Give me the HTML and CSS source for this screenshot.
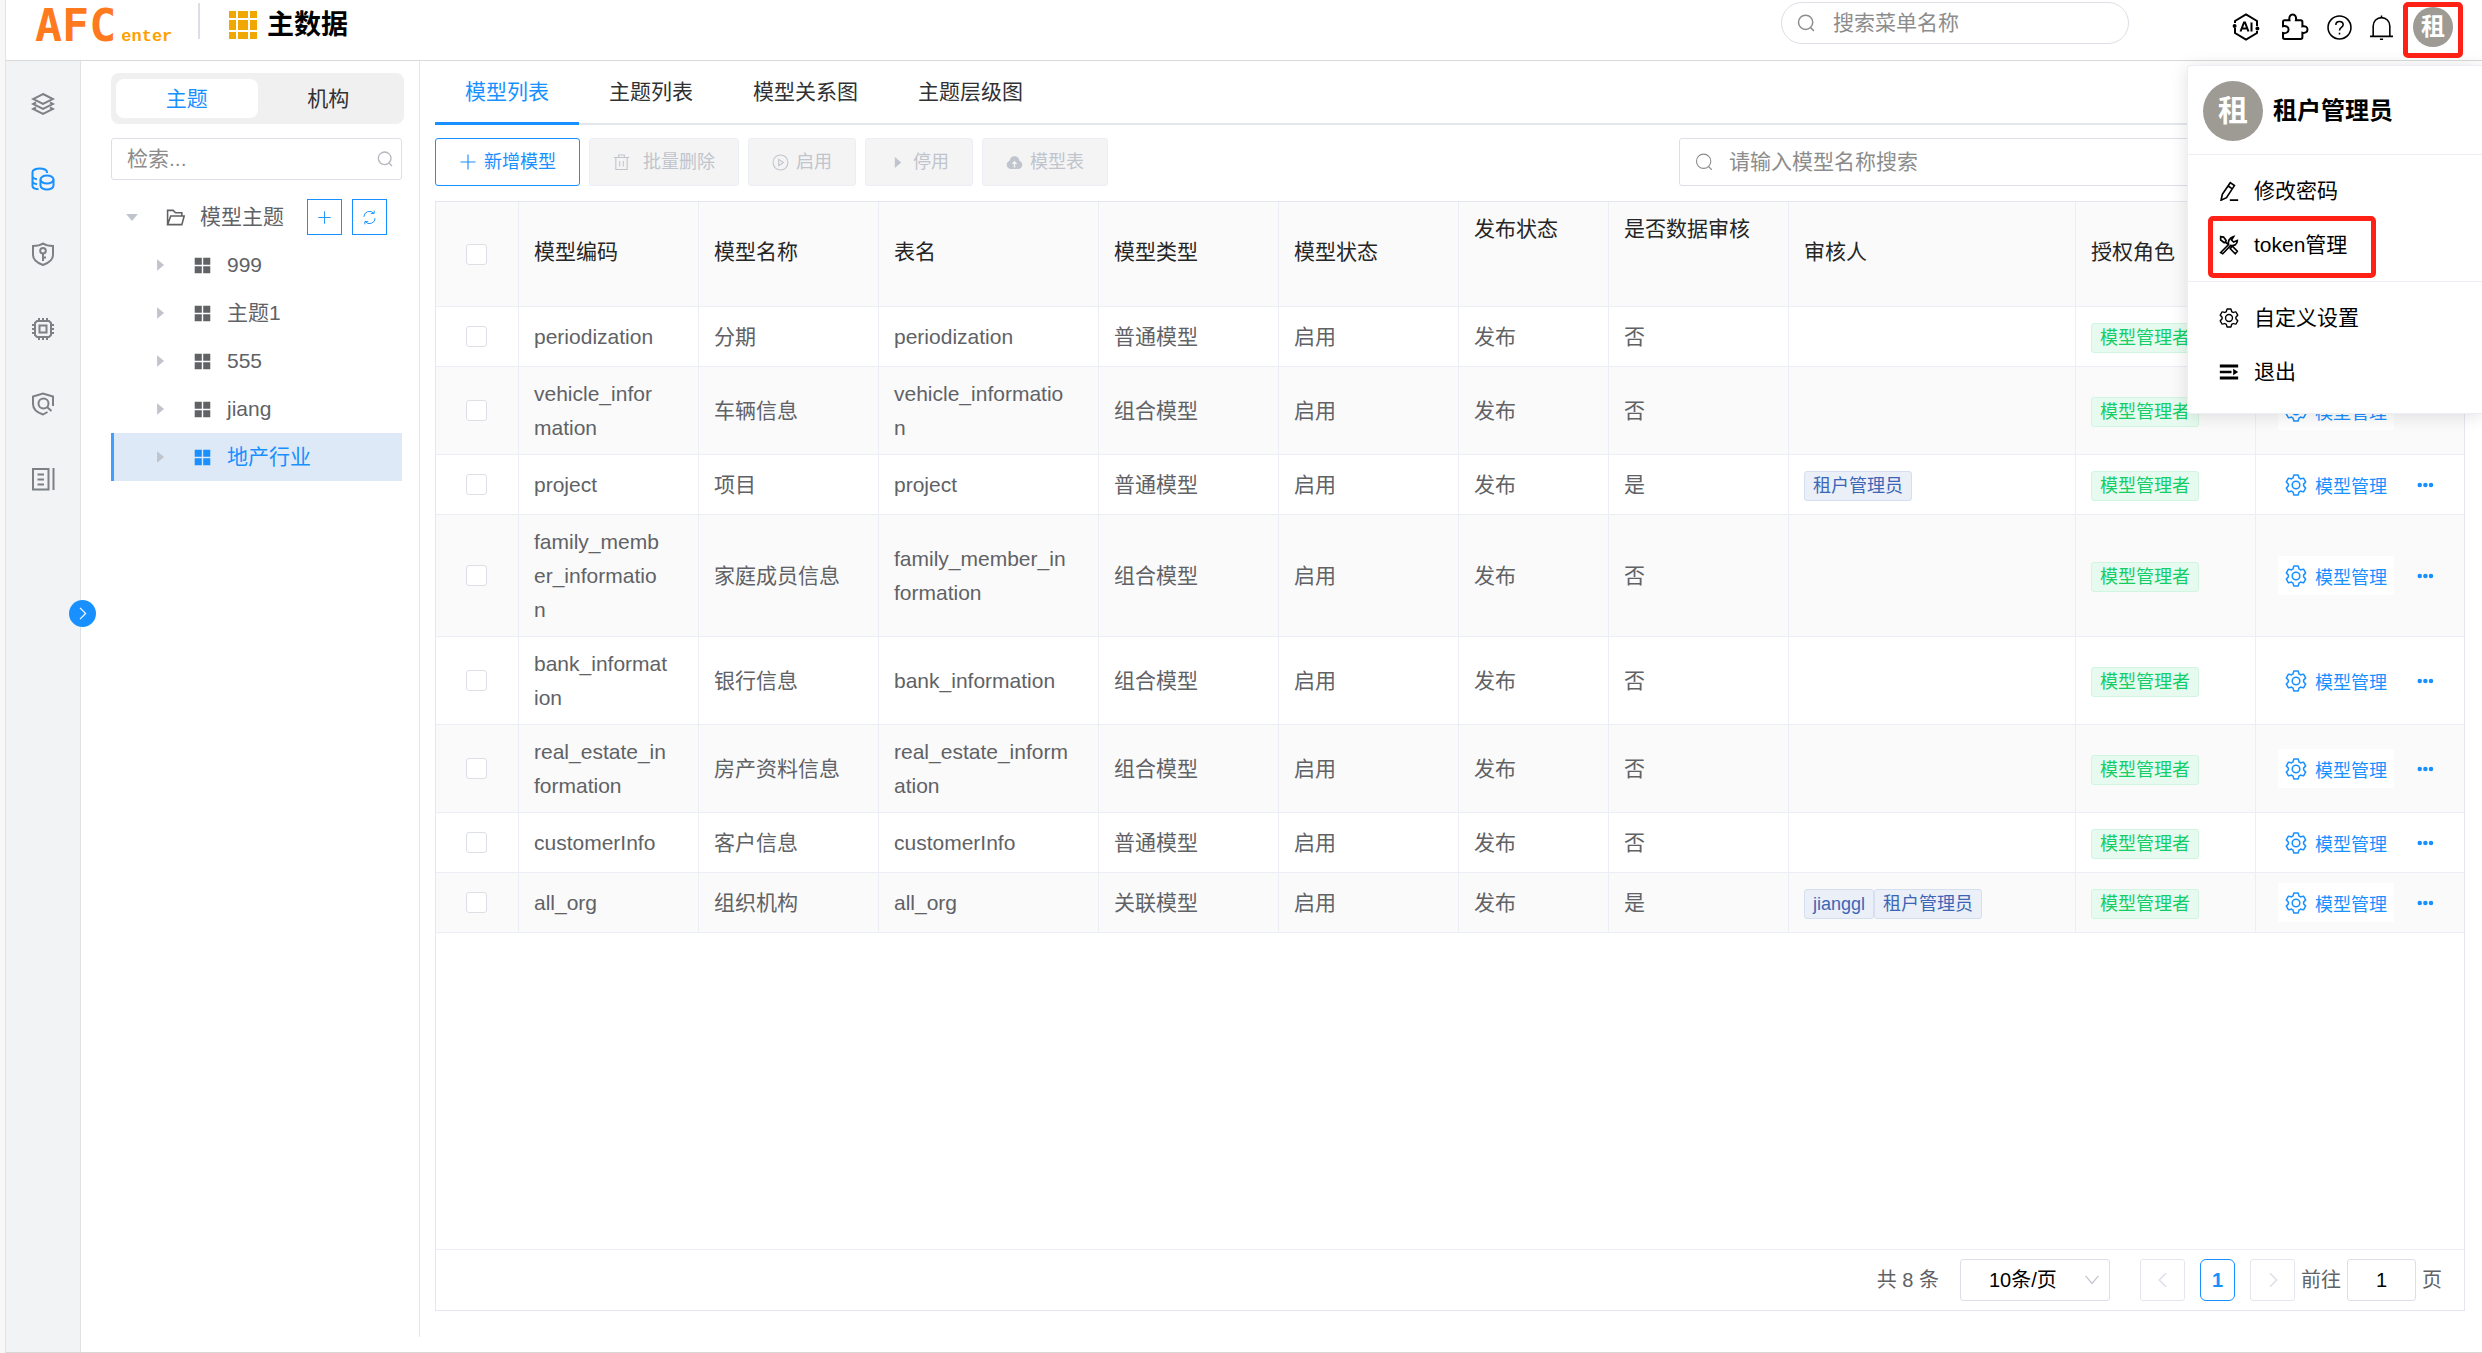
FILE: index.html
```html
<!DOCTYPE html>
<html lang="zh-CN">
  <head>
    <meta charset="UTF-8" />
    <meta name="viewport" content="width=device-width, initial-scale=1.0" />
    <title>主数据</title>
    <link rel="stylesheet" href="styles.css">
  </head>
  <body>
    <!-- icons -->
    <svg class="sprite" aria-hidden="true">
      <symbol id="i-search" viewBox="0 0 24 24"><circle cx="11.5" cy="11" r="9.5" /><path d="M18 18l4.5 4.5" /></symbol>
      <symbol id="i-plus" viewBox="0 0 24 24"><path d="M12 2v20M2 12h20" /></symbol>
      <symbol id="i-refresh" viewBox="0 0 24 24"><path d="M21 13a9 9 0 0 1-16 5.500M3 11a9 9 0 0 1 16-5.500M14 5.500h5.500V1M10 18.500H4.500V23" /></symbol>
      <symbol id="i-right" viewBox="0 0 24 24"><path d="M8 3l9 9-9 9" /></symbol>
      <symbol id="i-left" viewBox="0 0 24 24"><path d="M16 3l-9 9 9 9" /></symbol>
      <symbol id="i-caret" viewBox="0 0 24 24"><path d="M7 2l12 10L7 22z" /></symbol>
      <symbol id="i-folder" viewBox="0 0 24 24"><path d="M2 21V3h7l3 3h8v4M2 21L6 10h17l-3 11z" /></symbol>
      <symbol id="i-grid" viewBox="0 0 24 24"><path d="M1 1h10v10H1zM13 1h10v10H13zM1 13h10v10H1zM13 13h10v10H13z" /></symbol>
      <symbol id="i-layers" viewBox="0 0 24 24"><path d="M12 2l10 5-10 5L2 7zM5 10.500L2 12l10 5 10-5-3-1.500M5 15.500L2 17l10 5 10-5-3-1.500" /></symbol>
      <symbol id="i-data" viewBox="0 0 24 24"><ellipse cx="16" cy="12.500" rx="6.500" ry="4" /><path d="M9.500 12.500v6c0 2.200 3 4 6.500 4s6.500-1.800 6.500-4v-6M16 6V5c0-2-3.200-3.500-7.200-3.500S1.500 3 1.500 5v14c0 1.800 2.500 3 6 3.300M1.500 10c1 1.300 2.500 2 4.500 2.300M1.500 15c1 1.300 2.500 2 4.500 2.300" /></symbol>
      <symbol id="i-shield-key" viewBox="0 0 24 24"><path d="M12 1.500c3 2 6 2.500 10 2.500v9c0 5-4.500 8-10 10-5.500-2-10-5-10-10V4c4 0 7-.5 10-2.500z" /><circle cx="12" cy="8.800" r="2.800" /><path d="M12 11.600V19M12 15.500h3" /></symbol>
      <symbol id="i-chip" viewBox="0 0 24 24"><path d="M6 4h12l2 2v12l-2 2H6l-2-2V6zM8.500 8.500h7v7h-7zM8 4V1M12 4V1M16 4V1M8 23v-3M12 23v-3M16 23v-3M4 8H1M4 12H1M4 16H1M23 8h-3M23 12h-3M23 16h-3" /></symbol>
      <symbol id="i-shield-find" viewBox="0 0 24 24"><path d="M22 14V4.500L12 1.500 2 4.500V12c0 5 4 8.500 10 10.500l4.500-2.500" /><circle cx="12.500" cy="11.500" r="5" /><path d="M16 15l4.500 4" /></symbol>
      <symbol id="i-doc" viewBox="0 0 24 24"><path d="M2 2h15.500v20.500H2zM22.500 1v22M6.500 7.500h6.500M6.500 12.500h6.500M6.500 17.500h6.500" /></symbol>
      <symbol id="i-trash" viewBox="0 0 24 24"><path d="M1 5h22M8 5V1.500h8V5M4 5v17h16V5M9.500 10v7.500M14.500 10v7.500" /></symbol>
      <symbol id="i-play" viewBox="0 0 24 24"><circle cx="12" cy="12" r="10.500" /><path d="M9.500 7.500l6.500 4.500-6.500 4.500z" /></symbol>
      <symbol id="i-cloud" viewBox="0 0 24 24"><path fill-rule="evenodd" d="M12 3c-4 0-6.500 3-7 6.500C2.500 10.500 1 12.600 1 15c0 3.400 2.600 6 6 6h10c3.400 0 6-2.600 6-6 0-2.400-1.500-4.500-4-5.500C18.500 6 16 3 12 3zM12 9.500l4 4.500h-3v5h-2v-5H8z" /></symbol>
      <symbol id="i-ai" viewBox="0 0 28 28"><path d="M3 10V8L14 1.500 25 8v5M25 18v2L14 26.500 3 20v-5" /><path d="M8.500 18.500l3.500-9h1l3.500 9M9.800 15.500h5.400M19.500 9.500v9" /><circle cx="2.600" cy="13" r="1" /><circle cx="25.400" cy="15.500" r="1" /></symbol>
      <symbol id="i-puzzle" viewBox="0 0 28 28"><path d="M2 9.500V9c0-1 .8-1.700 1.700-1.700H8.500c-.8-3.500 1-5.800 3.200-5.800s4 2.300 3.200 5.800h4.800c1 0 1.700.8 1.700 1.700v4.400c3-.8 5.100.8 5.100 3.100s-2.100 4-5.100 3.200v4.600c0 1-.8 1.700-1.700 1.700h-16c-1 0-1.700-.8-1.700-1.700V20c3 .6 5.600-.8 5.600-3.500S5 12.600 2 13.200z" /></symbol>
      <symbol id="i-help" viewBox="0 0 24 24"><circle cx="12" cy="12" r="11" /><path d="M8.500 9.500c0-2 1.500-3.300 3.500-3.300s3.500 1.300 3.500 3.200c0 2.600-3.500 2.600-3.500 5.400M12 17v1.800" /></symbol>
      <symbol id="i-bell" viewBox="0 0 24 24"><path d="M1 20.500h22M4 20.500V10.500a8 8 0 0 1 16 0v10M12 2.500V.5M10.500 23.300h3" /></symbol>
      <symbol id="i-pen" viewBox="0 0 24 24"><path d="M13.500 2l5 3.500L9 20l-6.500 3L4 16zM11 6l5 3.500M13 23h10" /></symbol>
      <symbol id="i-tools" viewBox="0 0 24 24"><path d="M2 2l3.500.5 3 4-.5 2-2 .5-4-3zM8 8.500l3.500 3.500M14.500 15l1.500-1.500 6 6-2.500 3-6-6zM2 21l9.500-9.500c-1-3.500.5-8 6-9.500l-2.500 4 2.500 2.500 4.500-2c0 5-4 7-8 6L4.500 22.500z" /></symbol>
      <symbol id="i-exit" viewBox="0 0 24 24"><path d="M1 3h22v3.500H1zM1 17.500h22V21H1zM1 10.500h14v3H1zM17 8l6 4-6 4z" /></symbol>
      <symbol id="i-down" viewBox="0 0 24 24"><path d="M1 5l11 13L23 5" /></symbol>
      <symbol id="i-dots" viewBox="0 0 24 24"><circle cx="5" cy="12" r="3" /><circle cx="12.500" cy="12" r="3" /><circle cx="20" cy="12" r="3" /></symbol>
      <symbol id="i-gear" viewBox="64 50 896 924"><path d="M600.704 64a32 32 0 0 1 30.464 22.208l35.200 109.376c14.784 7.232 28.928 15.360 42.432 24.512l112.384-24.192a32 32 0 0 1 34.432 15.360L944.320 364.800a32 32 0 0 1-4.032 37.504l-77.120 85.120a357.120 357.120 0 0 1 0 49.024l77.120 85.248a32 32 0 0 1 4.032 37.504l-88.704 153.600a32 32 0 0 1-34.432 15.296L708.800 803.904c-13.440 9.088-27.648 17.280-42.368 24.512l-35.264 109.376A32 32 0 0 1 600.704 960H423.296a32 32 0 0 1-30.464-22.208L357.696 828.480a351.616 351.616 0 0 1-42.560-24.640l-112.320 24.256a32 32 0 0 1-34.432-15.360L79.680 659.200a32 32 0 0 1 4.032-37.504l77.120-85.248a357.120 357.120 0 0 1 0-48.896l-77.120-85.248A32 32 0 0 1 79.680 364.800l88.704-153.600a32 32 0 0 1 34.432-15.296l112.320 24.256c13.568-9.152 27.776-17.408 42.560-24.640l35.200-109.312A32 32 0 0 1 423.232 64H600.640zm-23.424 64H446.720l-36.352 113.088-24.512 11.968a294.113 294.113 0 0 0-34.816 20.096l-22.656 15.360-116.224-25.088-65.280 113.152 79.680 88.192-1.920 27.136a293.120 293.120 0 0 0 0 40.192l1.920 27.136-79.808 88.192 65.344 113.152 116.224-25.024 22.656 15.296a294.113 294.113 0 0 0 34.816 20.096l24.512 11.968L446.720 896h130.688l36.480-113.152 24.448-11.904a288.282 288.282 0 0 0 34.752-20.096l22.592-15.296 116.288 25.024 65.280-113.152-79.744-88.192 1.920-27.136a293.120 293.120 0 0 0 0-40.256l-1.920-27.136 79.808-88.128-65.344-113.152-116.288 24.960-22.592-15.232a287.616 287.616 0 0 0-34.752-20.096l-24.448-11.904L577.344 128zM512 320a192 192 0 1 1 0 384 192 192 0 0 1 0-384zm0 64a128 128 0 1 0 0 256 128 128 0 0 0 0-256z" /></symbol>
    </svg>

    <div class="app">
      <header class="header">
        <a class="logo" href="#">AFC<span>enter</span></a>
        <div class="product">
          <svg class="product_icon" viewBox="0 0 28 28"><path d="M0 0h7v7H0zM9 0h10v7H9zM21 0h7v7h-7zM0 9h7v10H0zM9 9h10v10H9zM21 9h7v10h-7zM0 21h7v7H0zM9 21h10v7H9zM21 21h7v7h-7z" /></svg>
          <h1>主数据</h1>
        </div>
        <label class="menu_search">
          <svg class="icon"><use href="#i-search" /></svg>
          <input type="text" placeholder="搜索菜单名称" aria-label="搜索菜单名称" />
        </label>
        <div class="header_tools">
          <button type="button" aria-label="AI"><svg class="icon tool"><use href="#i-ai" /></svg></button>
          <button type="button" aria-label="插件"><svg class="icon tool"><use href="#i-puzzle" /></svg></button>
          <button type="button" aria-label="帮助"><svg class="icon tool tool_small"><use href="#i-help" /></svg></button>
          <button type="button" aria-label="通知"><svg class="icon tool tool_small"><use href="#i-bell" /></svg></button>
          <button type="button" class="user_btn mark"><span class="avatar">租</span></button>
        </div>
      </header>

      <div class="body">
        <nav class="sidebar">
          <a href="#" aria-label="分层"><svg class="icon"><use href="#i-layers" /></svg></a>
          <a href="#" class="active" aria-label="主数据"><svg class="icon"><use href="#i-data" /></svg></a>
          <a href="#" aria-label="密钥"><svg class="icon"><use href="#i-shield-key" /></svg></a>
          <a href="#" aria-label="芯片"><svg class="icon"><use href="#i-chip" /></svg></a>
          <a href="#" aria-label="审计"><svg class="icon"><use href="#i-shield-find" /></svg></a>
          <a href="#" aria-label="文档"><svg class="icon"><use href="#i-doc" /></svg></a>
          <button type="button" class="toggle" aria-label="展开"><svg class="icon"><use href="#i-right" /></svg></button>
        </nav>

        <aside class="tree_panel">
          <div class="segment">
            <button type="button" class="active">主题</button>
            <button type="button">机构</button>
          </div>
          <label class="tree_search">
            <input type="text" placeholder="检索..." aria-label="检索" />
            <svg class="icon"><use href="#i-search" /></svg>
          </label>
          <div class="tree_root">
            <svg class="caret open"><use href="#i-caret" /></svg>
            <svg class="icon folder"><use href="#i-folder" /></svg>
            <span>模型主题</span>
            <button type="button" aria-label="新增"><svg class="icon"><use href="#i-plus" /></svg></button>
            <button type="button" aria-label="刷新"><svg class="icon"><use href="#i-refresh" /></svg></button>
          </div>
          <ul class="tree">
            <li><svg class="caret"><use href="#i-caret" /></svg><svg class="grid"><use href="#i-grid" /></svg>999</li>
            <li><svg class="caret"><use href="#i-caret" /></svg><svg class="grid"><use href="#i-grid" /></svg>主题1</li>
            <li><svg class="caret"><use href="#i-caret" /></svg><svg class="grid"><use href="#i-grid" /></svg>555</li>
            <li><svg class="caret"><use href="#i-caret" /></svg><svg class="grid"><use href="#i-grid" /></svg>jiang</li>
            <li class="active"><svg class="caret"><use href="#i-caret" /></svg><svg class="grid"><use href="#i-grid" /></svg>地产行业</li>
          </ul>
        </aside>

        <main class="main">
          <div class="tabs">
            <a href="#" class="active">模型列表</a>
            <a href="#">主题列表</a>
            <a href="#">模型关系图</a>
            <a href="#">主题层级图</a>
          </div>
          <div class="toolbar">
            <button type="button" class="primary"><svg class="icon"><use href="#i-plus" /></svg>新增模型</button>
            <button type="button" class="wide" disabled><svg class="icon"><use href="#i-trash" /></svg>批量删除</button>
            <button type="button" disabled><svg class="icon"><use href="#i-play" /></svg>启用</button>
            <button type="button" disabled><svg class="icon solid stop"><use href="#i-caret" /></svg>停用</button>
            <button type="button" disabled><svg class="icon solid"><use href="#i-cloud" /></svg>模型表</button>
            <label class="model_search">
              <svg class="icon"><use href="#i-search" /></svg>
              <input type="text" placeholder="请输入模型名称搜索" aria-label="请输入模型名称搜索" />
            </label>
          </div>

          <section class="card">
            <table>
              <colgroup>
                <col class="c_check" />
                <col class="c_mid" />
                <col class="c_mid" />
                <col class="c_table" />
                <col class="c_mid" />
                <col class="c_mid" />
                <col class="c_pub" />
                <col class="c_mid" />
                <col />
                <col class="c_mid" />
                <col class="c_act" />
              </colgroup>
              <thead>
                <tr>
                  <th><input type="checkbox" aria-label="全选" /></th>
                  <th>模型编码</th>
                  <th>模型名称</th>
                  <th>表名</th>
                  <th>模型类型</th>
                  <th>模型状态</th>
                  <th class="top">发布状态</th>
                  <th class="top">是否数据审核</th>
                  <th>审核人</th>
                  <th>授权角色</th>
                  <th aria-label="操作"></th>
                </tr>
              </thead>
              <tbody>
                <tr>
                  <td><input type="checkbox" aria-label="periodization" /></td>
                  <td>periodization</td><td>分期</td><td>periodization</td>
                  <td>普通模型</td><td>启用</td><td>发布</td><td>否</td>
                  <td></td>
                  <td><span class="tag green">模型管理者</span></td>
                  <td><div class="actions"><button type="button" class="manage"><svg class="gear"><use href="#i-gear" /></svg><span>模型管理</span></button><button type="button" class="more" aria-label="更多"><svg><use href="#i-dots" /></svg></button></div></td>
                </tr>
                <tr>
                  <td><input type="checkbox" aria-label="vehicle_information" /></td>
                  <td>vehicle_information</td><td>车辆信息</td><td>vehicle_information</td>
                  <td>组合模型</td><td>启用</td><td>发布</td><td>否</td>
                  <td></td>
                  <td><span class="tag green">模型管理者</span></td>
                  <td><div class="actions"><button type="button" class="manage"><svg class="gear"><use href="#i-gear" /></svg><span>模型管理</span></button><button type="button" class="more" aria-label="更多"><svg><use href="#i-dots" /></svg></button></div></td>
                </tr>
                <tr>
                  <td><input type="checkbox" aria-label="project" /></td>
                  <td>project</td><td>项目</td><td>project</td>
                  <td>普通模型</td><td>启用</td><td>发布</td><td>是</td>
                  <td><span class="tag blue">租户管理员</span></td>
                  <td><span class="tag green">模型管理者</span></td>
                  <td><div class="actions"><button type="button" class="manage"><svg class="gear"><use href="#i-gear" /></svg><span>模型管理</span></button><button type="button" class="more" aria-label="更多"><svg><use href="#i-dots" /></svg></button></div></td>
                </tr>
                <tr>
                  <td><input type="checkbox" aria-label="family_member_information" /></td>
                  <td>family_member_information</td><td>家庭成员信息</td><td>family_member_information</td>
                  <td>组合模型</td><td>启用</td><td>发布</td><td>否</td>
                  <td></td>
                  <td><span class="tag green">模型管理者</span></td>
                  <td><div class="actions"><button type="button" class="manage"><svg class="gear"><use href="#i-gear" /></svg><span>模型管理</span></button><button type="button" class="more" aria-label="更多"><svg><use href="#i-dots" /></svg></button></div></td>
                </tr>
                <tr>
                  <td><input type="checkbox" aria-label="bank_information" /></td>
                  <td>bank_information</td><td>银行信息</td><td>bank_information</td>
                  <td>组合模型</td><td>启用</td><td>发布</td><td>否</td>
                  <td></td>
                  <td><span class="tag green">模型管理者</span></td>
                  <td><div class="actions"><button type="button" class="manage"><svg class="gear"><use href="#i-gear" /></svg><span>模型管理</span></button><button type="button" class="more" aria-label="更多"><svg><use href="#i-dots" /></svg></button></div></td>
                </tr>
                <tr>
                  <td><input type="checkbox" aria-label="real_estate_information" /></td>
                  <td>real_estate_information</td><td>房产资料信息</td><td>real_estate_information</td>
                  <td>组合模型</td><td>启用</td><td>发布</td><td>否</td>
                  <td></td>
                  <td><span class="tag green">模型管理者</span></td>
                  <td><div class="actions"><button type="button" class="manage"><svg class="gear"><use href="#i-gear" /></svg><span>模型管理</span></button><button type="button" class="more" aria-label="更多"><svg><use href="#i-dots" /></svg></button></div></td>
                </tr>
                <tr>
                  <td><input type="checkbox" aria-label="customerInfo" /></td>
                  <td>customerInfo</td><td>客户信息</td><td>customerInfo</td>
                  <td>普通模型</td><td>启用</td><td>发布</td><td>否</td>
                  <td></td>
                  <td><span class="tag green">模型管理者</span></td>
                  <td><div class="actions"><button type="button" class="manage"><svg class="gear"><use href="#i-gear" /></svg><span>模型管理</span></button><button type="button" class="more" aria-label="更多"><svg><use href="#i-dots" /></svg></button></div></td>
                </tr>
                <tr>
                  <td><input type="checkbox" aria-label="all_org" /></td>
                  <td>all_org</td><td>组织机构</td><td>all_org</td>
                  <td>关联模型</td><td>启用</td><td>发布</td><td>是</td>
                  <td><span class="tag blue">jianggl</span><span class="tag blue">租户管理员</span></td>
                  <td><span class="tag green">模型管理者</span></td>
                  <td><div class="actions"><button type="button" class="manage"><svg class="gear"><use href="#i-gear" /></svg><span>模型管理</span></button><button type="button" class="more" aria-label="更多"><svg><use href="#i-dots" /></svg></button></div></td>
                </tr>
              </tbody>
            </table>

            <div class="pager">
              <span class="total">共 8 条</span>
              <span class="size">
                <select aria-label="每页条数"><option>10条/页</option></select>
                <svg class="icon"><use href="#i-down" /></svg>
              </span>
              <button type="button" disabled aria-label="上一页"><svg class="icon"><use href="#i-left" /></svg></button>
              <button type="button" class="current">1</button>
              <button type="button" disabled aria-label="下一页"><svg class="icon"><use href="#i-right" /></svg></button>
              <label class="jump">前往<input type="text" value="1" />页</label>
            </div>
          </section>
        </main>
      </div>

      <div class="user_menu">
        <div class="user_head"><span class="avatar big">租</span><strong>租户管理员</strong></div>
        <ul>
          <li><a href="#"><svg class="icon"><use href="#i-pen" /></svg>修改密码</a></li>
          <li><a href="#"><svg class="icon"><use href="#i-tools" /></svg>token管理</a><i class="mark"></i></li>
        </ul>
        <ul>
          <li><a href="#"><svg class="gear"><use href="#i-gear" /></svg>自定义设置</a></li>
          <li><a href="#"><svg class="icon solid"><use href="#i-exit" /></svg>退出</a></li>
        </ul>
      </div>
    </div>
  </body>
</html>
```
FILE: styles.css
```css
* {
  margin: 0;
  padding: 0;
  box-sizing: border-box;
}
body {
  background: #f7f7f7;
  color: #606266;
  font-family: "Liberation Sans", "Noto Sans CJK SC", sans-serif;
  font-size: 21px;
  line-height: 34px;
}
button,
input,
select {
  font: inherit;
  color: inherit;
  background: none;
  border: 0;
  outline: 0;
}
a {
  color: inherit;
  text-decoration: none;
}
ul {
  list-style: none;
}
svg {
  display: block;
  flex: none;
  fill: currentColor;
}
.sprite {
  position: absolute;
  width: 0;
  height: 0;
}
.icon {
  width: 18px;
  height: 18px;
  fill: none;
  stroke: currentColor;
  stroke-width: 2;
}
.icon.solid {
  fill: currentColor;
  stroke: none;
}
.gear {
  width: 22px;
  height: 22px;
}
::placeholder {
  color: #8c8c8c;
  opacity: 1;
}

.app {
  position: relative;
  display: flex;
  flex-direction: column;
  min-height: 100vh;
  margin-left: 5px;
  background: #fff;
  border-left: 1px solid #e2e3e5;
  border-bottom: 1px solid #d8d8d8;
  overflow: hidden;
}

/* header */
.header {
  display: flex;
  align-items: flex-start;
  height: 61px;
  padding-right: 19px;
  border-bottom: 1px solid #d9d9d9;
}
.logo {
  width: 194px;
  height: 36px;
  margin-top: 3px;
  padding-left: 29px;
  border-right: 2px solid #dcdfe6;
  color: #ff7a1f;
  font-family: "DejaVu Sans Mono", monospace;
  font-size: 45px;
  font-weight: 700;
  line-height: 45px;
  white-space: nowrap;
}
.logo span {
  margin-left: 5px;
  color: #ffa000;
  font-family: "Liberation Mono", monospace;
  font-size: 17px;
}
.product {
  display: flex;
  align-items: center;
  gap: 10px;
  height: 50px;
  margin-left: 29px;
}
.product_icon {
  width: 28px;
  height: 28px;
  fill: #f0a800;
}
.product h1 {
  color: #000;
  font-size: 27px;
}
.menu_search {
  display: flex;
  align-items: center;
  gap: 18px;
  width: 348px;
  height: 42px;
  margin: 2px 103px 0 auto;
  padding: 0 15px;
  border: 1px solid #dcdfe6;
  border-radius: 21px;
  color: #8c8c8c;
}
.menu_search input,
.model_search input,
.tree_search input {
  flex: 1;
  min-width: 0;
}
.header_tools {
  display: flex;
  align-items: center;
  height: 56px;
  margin-top: 2px;
  color: #000;
}
.header_tools button {
  margin: 0 21px 6px 0;
}
.header_tools button:nth-child(2) {
  margin-right: 18px;
}
.header_tools button:nth-child(3) {
  margin-right: 17px;
}
.header_tools button:nth-child(4) {
  margin-right: 9px;
}
.tool {
  width: 28px;
  height: 28px;
}
.tool_small {
  width: 25px;
  height: 25px;
  stroke-width: 1.5;
}
.mark {
  border: 5px solid #ff2116;
  border-radius: 5px;
}
.header_tools .user_btn {
  width: 60px;
  height: 56px;
  margin: 0;
  padding-bottom: 8px;
}
.avatar {
  display: flex;
  align-items: center;
  justify-content: center;
  width: 40px;
  height: 40px;
  margin: 0 auto;
  border-radius: 50%;
  background: #9e9a94;
  color: #fff;
  font-size: 24px;
  font-weight: 700;
}
.avatar.big {
  width: 60px;
  height: 60px;
  margin: 0;
  font-size: 30px;
}

.body {
  display: flex;
  flex: 1;
}

/* left icon bar */
.sidebar {
  position: relative;
  width: 75px;
  padding-top: 5px;
  background: #f1f3f5;
  border-right: 1px solid #dfe1e4;
  color: #7d8084;
}
.sidebar a {
  display: flex;
  align-items: center;
  justify-content: center;
  height: 75px;
}
.sidebar a .icon {
  width: 24px;
  height: 24px;
}
.sidebar .active {
  color: #1890ff;
}
.toggle {
  position: absolute;
  top: 539px;
  right: -16px;
  width: 27px;
  height: 27px;
  border-radius: 50%;
  background: #1890ff;
  color: #fff;
}
.toggle .icon {
  width: 15px;
  height: 15px;
  margin: 0 auto;
}

/* topic tree */
.tree_panel {
  width: 339px;
  margin-bottom: 15px;
  padding: 12px 15px 0 30px;
  border-right: 1px solid #e4e7ed;
}
.segment {
  display: flex;
  height: 51px;
  padding: 6px 5px;
  border-radius: 8px;
  background: #f0f0f0;
}
.segment button {
  flex: 1;
  border-radius: 8px;
  color: #303133;
}
.segment .active {
  background: #fff;
  color: #1890ff;
}
.tree_search {
  display: flex;
  align-items: center;
  height: 42px;
  margin: 14px 2px 13px 0;
  padding: 0 8px 0 15px;
  border: 1px solid #dcdfe6;
  border-radius: 3px;
}
.tree_search .icon {
  width: 16px;
  height: 16px;
  color: #b4b8bf;
}
.tree_root {
  display: flex;
  align-items: center;
  height: 48px;
  padding-left: 14px;
}
.caret {
  width: 14px;
  height: 14px;
  color: #c0c4cc;
}
.caret.open {
  transform: rotate(90deg);
}
.folder {
  width: 19px;
  height: 19px;
  margin: 0 15px 0 27px;
}
.tree_root button {
  display: flex;
  align-items: center;
  justify-content: center;
  width: 35px;
  height: 36px;
  margin-left: 10px;
  border: 1px solid #1890ff;
  color: #1890ff;
}
.tree_root span + button {
  margin-left: 23px;
}
.tree_root button .icon {
  width: 15px;
  height: 15px;
  stroke-width: 1.5;
}
.tree li {
  display: flex;
  align-items: center;
  height: 48px;
  margin-right: 2px;
  padding-left: 39px;
  border-left: 3px solid transparent;
}
.tree .active {
  background: #dde9f6;
  border-left-color: #409eff;
  color: #1890ff;
}
.grid {
  width: 17px;
  height: 17px;
  margin: 0 16px 0 27px;
}

/* content */
.main {
  display: flex;
  flex: 1;
  flex-direction: column;
  min-width: 0;
  padding: 0 17px 41px 15px;
}
.tabs {
  display: flex;
  height: 64px;
  border-bottom: 2px solid #e4e7ed;
  color: #303133;
}
.tabs a {
  height: 64px;
  padding: 0 30px;
  line-height: 62px;
}
.tabs .active {
  border-bottom: 3px solid #1890ff;
  color: #1890ff;
}
.toolbar {
  display: flex;
  gap: 9px;
  margin: 13px 0 15px;
}
.toolbar button {
  display: flex;
  align-items: center;
  gap: 7px;
  height: 48px;
  padding: 0 23px;
  border: 1px solid #ebeef5;
  border-radius: 3px;
  background: #f4f4f5;
  color: #c0c4cc;
  font-size: 18px;
  white-space: nowrap;
}
.toolbar .wide {
  gap: 13px;
}
.toolbar .icon {
  stroke-width: 1.5;
}
.toolbar button:disabled .icon {
  width: 17px;
  height: 17px;
}
.toolbar .primary {
  background: #fff;
  border-color: #1890ff;
  color: #1890ff;
}
.toolbar .stop {
  padding: 2px;
}
.model_search {
  display: flex;
  align-items: center;
  gap: 16px;
  width: 786px;
  height: 48px;
  margin-left: auto;
  padding: 0 15px;
  border: 1px solid #dcdfe6;
  border-radius: 3px;
  color: #8c8c8c;
}
.card {
  display: flex;
  flex: 1;
  flex-direction: column;
  border: 1px solid #e4e7ed;
}
table {
  width: 100%;
  table-layout: fixed;
  border-collapse: separate;
  border-spacing: 0;
}
.c_check {
  width: 83px;
}
.c_mid {
  width: 180px;
}
.c_table {
  width: 220px;
}
.c_pub {
  width: 150px;
}
.c_act {
  width: 208px;
}
th,
td {
  height: 60px;
  padding: 10px 30px 9px 15px;
  border-right: 1px solid #ebeef5;
  border-bottom: 1px solid #ebeef5;
  text-align: left;
  word-break: break-all;
}
th {
  height: 105px;
  padding: 10px 15px 14px;
  background: #fafafa;
  color: #262626;
  font-weight: 400;
}
th.top {
  vertical-align: top;
}
td:last-child,
th:last-child {
  border-right: 0;
}
tbody tr:nth-child(even) {
  background: #fafafa;
}
td:nth-child(n + 9) {
  padding: 0 15px;
}
td:first-child,
th:first-child {
  padding: 0 0 0 30px;
}
input[type="checkbox"] {
  display: block;
  appearance: none;
  width: 21px;
  height: 21px;
  border: 1px solid #dcdfe6;
  border-radius: 3px;
  background: #fff;
}
.tag {
  display: inline-block;
  height: 30px;
  padding: 0 8px;
  border: 1px solid;
  border-radius: 3px;
  font-size: 18px;
  line-height: 28px;
  vertical-align: middle;
}
.green {
  background: #e7faf0;
  border-color: #d0f5e0;
  color: #13ce66;
}
.blue {
  background: #eaeff8;
  border-color: #d5dff0;
  color: #3c66b5;
}
.actions {
  display: flex;
  align-items: center;
  gap: 22px;
  padding-left: 7px;
  color: #1890ff;
}
.manage {
  display: flex;
  align-items: center;
  gap: 8px;
  height: 39px;
  padding: 0 7px;
  background: #fff;
  font-size: 18px;
  white-space: nowrap;
}
.manage span {
  padding-top: 4px;
}
.more svg {
  width: 18px;
  height: 18px;
}

/* pagination */
.pager {
  display: flex;
  align-items: center;
  justify-content: flex-end;
  height: 61px;
  margin-top: auto;
  padding-right: 22px;
  border-top: 1px solid #ebeef5;
  font-size: 20px;
}
.size {
  position: relative;
  margin: 0 30px 0 21px;
}
.size select {
  display: block;
  appearance: none;
  width: 150px;
  height: 42px;
  padding-left: 28px;
  border: 1px solid #dcdfe6;
  border-radius: 3px;
  color: #000;
}
.size .icon {
  position: absolute;
  top: 14px;
  right: 11px;
  width: 14px;
  height: 14px;
  color: #c0c4cc;
}
.pager button {
  width: 45px;
  height: 42px;
  border: 1px solid #e4e7ed;
  border-radius: 3px;
  color: #dcdfe6;
}
.pager button .icon {
  margin: 0 auto;
}
.pager .current {
  width: 35px;
  margin: 0 15px;
  border-color: #1890ff;
  border-radius: 6px;
  color: #1890ff;
  font-weight: 700;
}
.jump {
  display: flex;
  align-items: center;
  gap: 6px;
  margin-left: 6px;
}
.jump input {
  width: 69px;
  height: 42px;
  border: 1px solid #dcdfe6;
  border-radius: 3px;
  color: #000;
  text-align: center;
}

/* user dropdown */
.user_menu {
  position: absolute;
  top: 65px;
  right: 0;
  width: 295px;
  padding-bottom: 5px;
  border: 1px solid #ebeef5;
  border-right: 0;
  border-radius: 4px 0 0 4px;
  background: #fff;
  box-shadow: 0 2px 18px rgba(0, 0, 0, 0.12);
  color: #000;
}
.user_head {
  display: flex;
  align-items: center;
  gap: 10px;
  padding: 15px 15px 13px;
}
.user_head strong {
  font-size: 24px;
}
.user_menu ul {
  padding: 9px 0;
  border-top: 1px solid #ebeef5;
}
.user_menu li {
  position: relative;
}
.user_menu a {
  display: flex;
  align-items: center;
  gap: 15px;
  height: 54px;
  padding-left: 31px;
}
.user_menu a svg {
  width: 20px;
  height: 20px;
}
.user_menu .mark {
  position: absolute;
  top: -2px;
  left: 20px;
  width: 168px;
  height: 62px;
}
```
